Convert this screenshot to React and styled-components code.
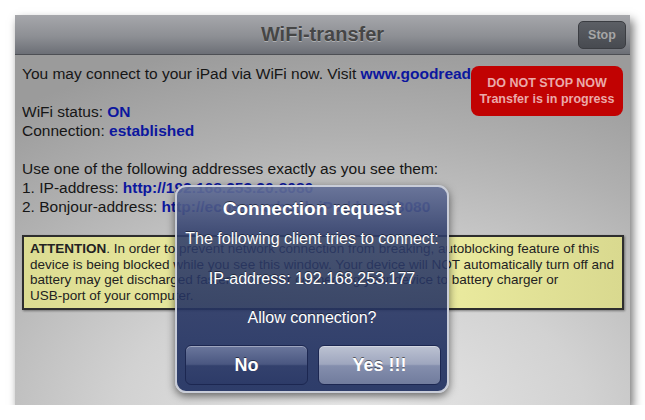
import React from "react";
import styled, { createGlobalStyle } from "styled-components";

const GlobalStyle = createGlobalStyle`
  html, body {
    margin: 0;
    background: #ffffff;
    font-family: "Liberation Sans", Arial, sans-serif;
  }
`;

const Page = styled.div`
  padding: 15px 0 0 15px;
`;

const Screen = styled.div`
  position: relative;
  width: 615px;
  height: 390px;
  display: flex;
  flex-direction: column;
  box-shadow: 3px 5px 9px rgba(0, 0, 0, 0.55);
`;

const NavBar = styled.div`
  height: 40px;
  flex: none;
  display: grid;
  grid-template-columns: 1fr auto 1fr;
  align-items: center;
  background: linear-gradient(to bottom, #a6a7ab 0%, #8d8f94 55%, #6c6f76 100%);
  border-bottom: 1px solid #4d4f54;
  box-sizing: border-box;
`;

const Title = styled.h1`
  grid-column: 2;
  margin: 0;
  font-size: 20px;
  font-weight: bold;
  color: #464646;
  text-shadow: 0 1px 0 rgba(255, 255, 255, 0.35);
`;

const StopButton = styled.button`
  grid-column: 3;
  justify-self: end;
  margin-right: 4px;
  width: 48px;
  height: 28px;
  border-radius: 5px;
  border: 1px solid #3b3d42;
  background: linear-gradient(to bottom, #5c5f65, #474a50);
  color: #a6a6a6;
  font-family: inherit;
  font-size: 12.5px;
  font-weight: bold;
  padding: 0;
`;

const Content = styled.div`
  position: relative;
  flex: 1;
  padding: 9px 6px 0 7px;
  background: radial-gradient(ellipse 95% 110% at 55% 105%, #e9e9e9 0%, #d2d2d2 40%, #b0b0b0 75%, #9b9b9b 100%);
  color: #161616;
  font-size: 15.5px;
  line-height: 19px;
`;

const Line = styled.div`
  white-space: nowrap;
  overflow: hidden;
  margin-top: ${(p) => (p.gap ? "19px" : "0")};
`;

const Link = styled.b`
  color: #0c179e;
`;

const Badge = styled.div`
  position: absolute;
  top: 11px;
  right: 7px;
  width: 152px;
  height: 50px;
  border-radius: 8px;
  background: #c10202;
  color: #eba9a9;
  font-size: 12.5px;
  font-weight: bold;
  line-height: 16px;
  display: flex;
  flex-direction: column;
  align-items: center;
  justify-content: center;
`;

const Attention = styled.div`
  margin-top: 19px;
  padding: 4px 6px 5px;
  border: 2px solid #2e2e2e;
  background: linear-gradient(to right, #dcdc92 0%, #eeeea2 45%, #f1f1a4 60%, #d9d98f 100%);
  box-shadow: 1px 1px 2px rgba(0, 0, 0, 0.4);
  font-size: 13.5px;
  line-height: 15.5px;
  color: #222;
  white-space: nowrap;
`;

const Alert = styled.div`
  position: absolute;
  left: 160px;
  top: 170px;
  width: 274px;
  height: 208px;
  box-sizing: border-box;
  padding: 11px 5px 0;
  border: 2px solid #c9cdd8;
  border-radius: 11px;
  background: linear-gradient(
    to bottom,
    rgba(98, 110, 150, 0.92) 0%,
    rgba(48, 62, 108, 0.88) 22%,
    rgba(36, 50, 97, 0.88) 55%,
    rgba(44, 59, 104, 0.97) 80%,
    rgba(46, 61, 106, 1) 100%
  );
  box-shadow: 0 3px 8px rgba(0, 0, 0, 0.55);
  color: #fff;
  text-align: center;
  display: flex;
  flex-direction: column;
`;

const AlertTitle = styled.div`
  font-size: 19px;
  font-weight: bold;
  line-height: 22px;
  text-shadow: 0 -1px 0 rgba(0, 0, 0, 0.5);
`;

const AlertText = styled.div`
  font-size: 16px;
  line-height: 20px;
  margin-top: ${(p) => p.gap}px;
  text-shadow: 0 -1px 0 rgba(0, 0, 0, 0.45);
  white-space: nowrap;
`;

const Buttons = styled.div`
  margin-top: 17px;
  display: grid;
  grid-template-columns: 1fr 1fr;
  gap: 10px;
  padding: 0 1px 0 3px;
`;

const AlertButton = styled.button`
  height: 40px;
  border-radius: 6px;
  border: 1px solid #1c2751;
  background: ${(p) =>
    p.primary
      ? "linear-gradient(to bottom, #bcc2d2 0%, #9ea6be 48%, #848ead 52%, #717c9d 100%)"
      : "linear-gradient(to bottom, #6b779c 0%, #4a5781 48%, #33416d 52%, #2d3b68 100%)"};
  box-shadow: inset 0 1px 0 rgba(255, 255, 255, 0.35);
  color: #fff;
  font-family: inherit;
  font-size: 18px;
  font-weight: bold;
  text-shadow: 0 -1px 0 rgba(0, 0, 0, 0.5);
  padding: 0;
`;

export default function App() {
  return (
    <>
      <GlobalStyle />
      <Page>
        <Screen>
          <NavBar>
            <Title>WiFi-transfer</Title>
            <StopButton>Stop</StopButton>
          </NavBar>
          <Content>
            <Line>
              You may connect to your iPad via WiFi now. Visit <Link>www.goodreader.net/wifi</Link> for details.
            </Line>
            <Line gap>
              WiFi status: <Link>ON</Link>
            </Line>
            <Line>
              Connection: <Link>established</Link>
            </Line>
            <Line gap>Use one of the following addresses exactly as you see them:</Line>
            <Line>
              1. IP-address: <Link>http://192.168.253.20:8080</Link>
            </Line>
            <Line>
              2. Bonjour-address: <Link>http://ecos-macbook-iPad.local:8080</Link>
            </Line>
            <Attention>
              <b>ATTENTION</b>. In order to prevent network connection from breaking, autoblocking feature of this
              <br />
              device is being blocked while you see this window. Your device will NOT automatically turn off and
              <br />
              battery may get discharged faster. Consider connecting your device to battery charger or
              <br />
              USB-port of your computer.
            </Attention>
            <Badge>
              <span>DO NOT STOP NOW</span>
              <span>Transfer is in progress</span>
            </Badge>
          </Content>
          <Alert>
            <AlertTitle>Connection request</AlertTitle>
            <AlertText gap={9}>The following client tries to connect:</AlertText>
            <AlertText gap={20}>IP-address: 192.168.253.177</AlertText>
            <AlertText gap={19}>Allow connection?</AlertText>
            <Buttons>
              <AlertButton>No</AlertButton>
              <AlertButton primary>Yes !!!</AlertButton>
            </Buttons>
          </Alert>
        </Screen>
      </Page>
    </>
  );
}
